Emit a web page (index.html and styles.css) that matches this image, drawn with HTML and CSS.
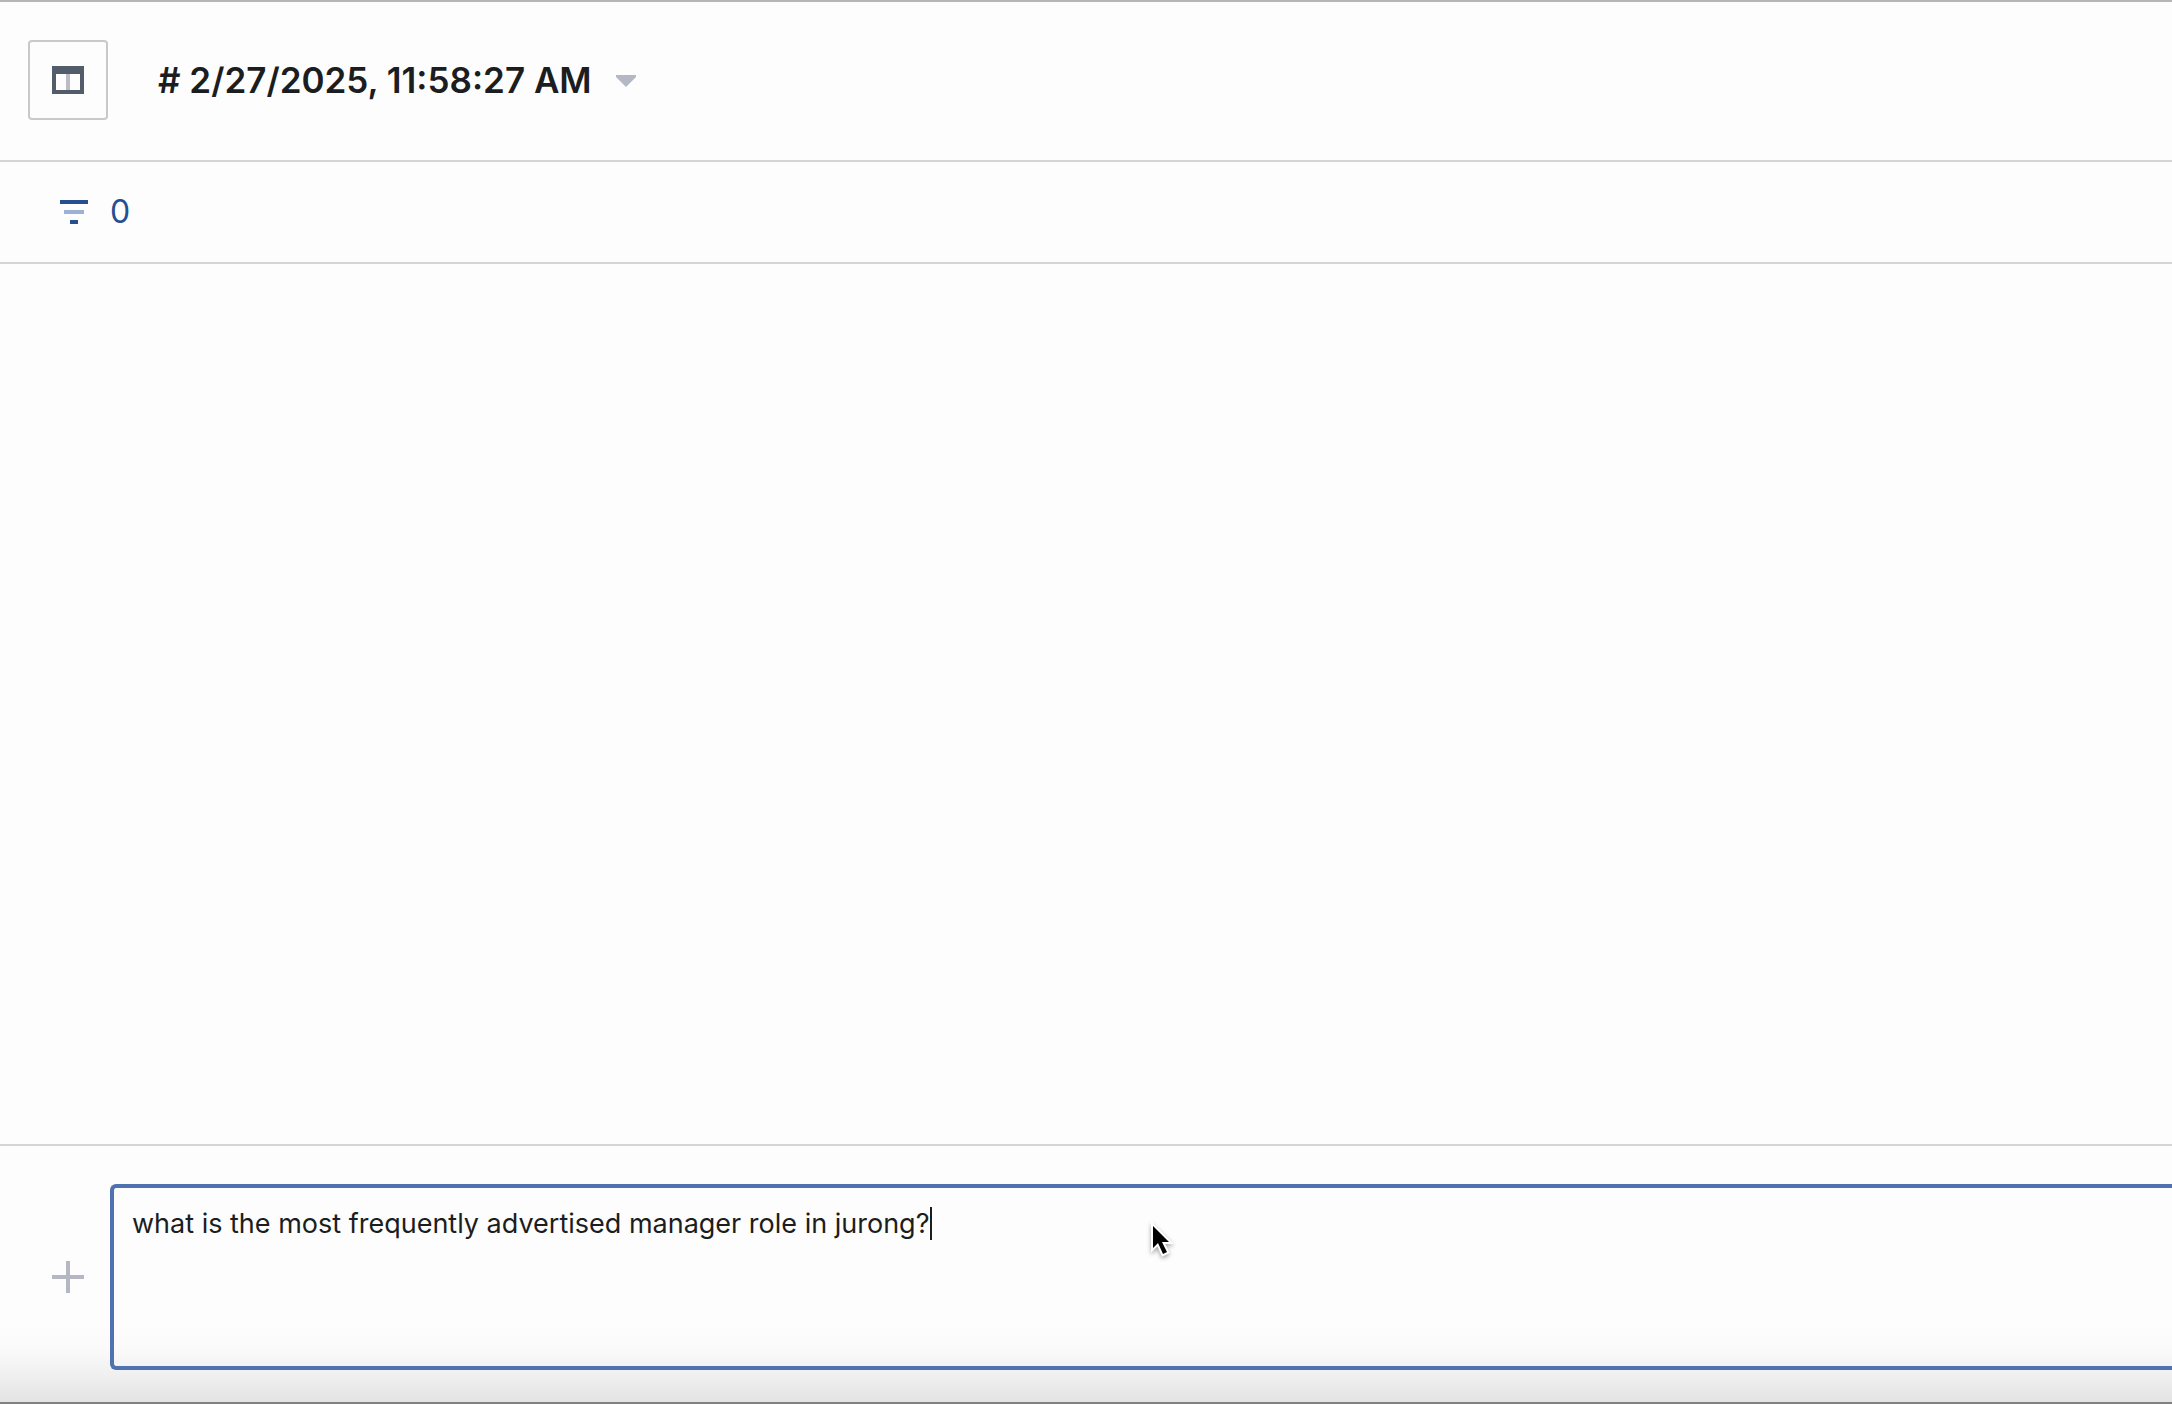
FILE: index.html
```html
<!DOCTYPE html>
<html lang="en">
<head>
<meta charset="utf-8">
<meta name="viewport" content="width=device-width, initial-scale=1">
<title># 2/27/2025, 11:58:27 AM</title>
<link rel="stylesheet" href="styles.css">
</head>
<body>
<div class="app">
  <header class="topbar">
    <button class="panel-toggle" type="button" aria-label="Toggle panel">
      <svg width="32" height="28" viewBox="0 0 32 28" aria-hidden="true">
        <path fill="#535c6b" fill-rule="evenodd" d="M0 0h32v28H0zM4 8v16h24V8z"/>
        <path fill="#b9bbc5" d="M14 8h4v16h-4z"/>
      </svg>
    </button>
    <h1 class="title">
      <button class="title-button" type="button">
        <span># 2/27/2025, 11:58:27 AM</span>
        <svg width="20" height="14" viewBox="0 0 20 14" aria-hidden="true"><path fill="#b4b8c4" d="M0 2h20v2L10 14 0 4z"/></svg>
      </button>
    </h1>
  </header>
  <div class="filterbar">
    <button class="filter-button" type="button" aria-label="Filters: 0">
      <svg width="28" height="24" viewBox="0 0 28 24" aria-hidden="true">
        <path fill="#254f92" d="M0 0h28v4H0zM10 20h8v4h-8z"/>
        <path fill="#9bb2d8" d="M4 10h20v4H4z"/>
      </svg>
      <span>0</span>
    </button>
  </div>
  <main class="messages"></main>
  <form class="composer">
    <button class="add-button" type="button" aria-label="Add">
      <svg width="32" height="32" viewBox="0 0 32 32" aria-hidden="true"><path fill="#b5b8c2" d="M14 0h4v14h14v4H18v14h-4V18H0v-4h14z"/></svg>
    </button>
    <div class="field">
      <textarea class="prompt" aria-label="Message" spellcheck="false">what is the most frequently advertised manager role in jurong?</textarea>
      <span class="text-caret"></span>
      <svg class="pointer" width="28" height="40" viewBox="0 0 28 40" aria-hidden="true">
        <path fill="#000" stroke="#fff" stroke-width="4" paint-order="stroke" stroke-linejoin="miter" d="M4 4v22l5-5 5 11 4-2-5-10h7z"/>
      </svg>
    </div>
  </form>
</div>
</body>
</html>
```
FILE: styles.css
```css
* {
  box-sizing: border-box;
}

body {
  margin: 0;
  background: #fdfdfd;
  color: #1c1d21;
  font-family: Inter, "Liberation Sans", sans-serif;
}

button {
  padding: 0;
  border: 0;
  background: none;
  color: inherit;
  font: inherit;
}

svg {
  display: block;
  flex: none;
}

.app {
  display: flex;
  flex-direction: column;
  min-height: 100vh;
  border-top: 2px solid #b5b5b5;
}

.topbar {
  display: flex;
  align-items: center;
  gap: 50px;
  padding: 38px 28px 40px;
  border-bottom: 2px solid #d5d5d5;
}

.panel-toggle {
  display: flex;
  align-items: center;
  justify-content: center;
  width: 80px;
  height: 80px;
  border: 2px solid #c9c9c9;
  border-radius: 4px;
}

.title {
  margin: 0;
  font-size: 35px;
  font-weight: 600;
  line-height: 44px;
}

.title-button {
  display: flex;
  align-items: center;
  gap: 24px;
}

.filterbar {
  display: flex;
  padding: 30px 60px;
  border-bottom: 2px solid #d5d5d5;
}

.filter-button {
  display: flex;
  align-items: center;
  gap: 22px;
  color: #254f92;
  font-size: 32px;
  line-height: 40px;
}

.messages {
  flex: 1;
}

.composer {
  display: flex;
  align-items: center;
  gap: 26px;
  padding: 38px 0 32px 52px;
  border-top: 2px solid #d5d5d5;
  border-bottom: 2px solid #808080;
  background: linear-gradient(to top, #e3e3e3, #f1f1f1 30px, #fafafa 52px, #fdfdfd 76px);
}

.field {
  position: relative;
  flex: 1;
}

.prompt {
  display: block;
  width: 100%;
  height: 186px;
  padding: 18px;
  border: 4px solid #5072b0;
  border-right: 0;
  border-radius: 6px 0 0 6px;
  outline: 0;
  background: transparent;
  color: inherit;
  font: 27px/36px Inter, "Liberation Sans", sans-serif;
  resize: none;
}

.text-caret {
  position: absolute;
  top: 23px;
  left: 820px;
  width: 2px;
  height: 33px;
  background: #1c1d21;
}

.pointer {
  position: absolute;
  top: 38px;
  left: 1039px;
  filter: drop-shadow(0 2px 2px rgb(0 0 0 / 35%));
}
```
